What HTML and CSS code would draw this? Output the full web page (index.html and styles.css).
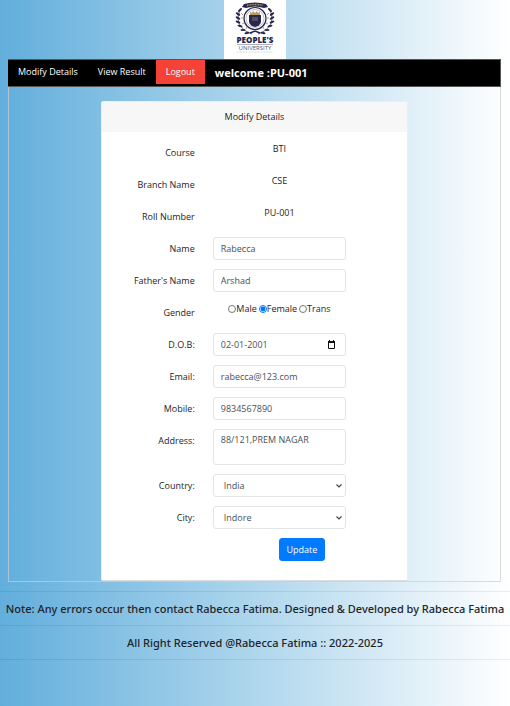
FILE: index.html
```html
<!DOCTYPE html>
<html lang="en">
<head>
<meta charset="utf-8">
<meta name="viewport" content="width=device-width, initial-scale=1">
<title>Modify Details</title>
<link rel="stylesheet" href="styles.css">
</head>
<body>
<header class="brand">
<svg class="logo" viewBox="0 0 62 59" role="img" aria-label="People's University">
<rect width="62" height="59" fill="#fff"/>
<g fill="none" stroke="#27264f">
<circle cx="31" cy="18.500" r="11" stroke-width="1.200"/>
<circle cx="31" cy="18.500" r="9" stroke-width=".5" stroke="#777a96"/>
<path d="M17 9C11 18 14 29 28 34M45 9c6 9 3 20-11 25" stroke-width=".7"/>
<path d="M26 33l5-2 5 2" stroke-width="1.500"/>
</g>
<path d="M20 4q11-3 22 0l2 3-4 1q-9-3-18 0l-4-1z" fill="#27264f"/>
<path d="M23 5.500q8-2 16 0" stroke="#b59a68" stroke-width="1.500" stroke-dasharray="1 .6" fill="none"/>
<path d="M25 15h12v7q-1 4-6 5-5-1-6-5z" fill="#27264f"/>
<path d="M26 12l2 1 1-2 2 2 2-2 1 2 2-1v3H26z" fill="#b59a68"/>
<path d="M28 18h6M28 20h6" stroke="#b59a68" stroke-width=".7"/>
<g fill="#27264f">
<ellipse cx="16" cy="10" rx="2.600" ry="1.100" transform="rotate(-45 16 10)"/>
<ellipse cx="14" cy="14" rx="2.600" ry="1.100" transform="rotate(35 14 14)"/>
<ellipse cx="14" cy="18" rx="2.600" ry="1.100" transform="rotate(30 14 18)"/>
<ellipse cx="14" cy="22" rx="2.600" ry="1.100" transform="rotate(25 14 22)"/>
<ellipse cx="16" cy="26" rx="2.600" ry="1.100" transform="rotate(15 16 26)"/>
<ellipse cx="19" cy="30" rx="2.600" ry="1.100"/>
<ellipse cx="23" cy="33" rx="2.600" ry="1.100" transform="rotate(-10 23 33)"/>
<ellipse cx="46" cy="10" rx="2.600" ry="1.100" transform="rotate(45 46 10)"/>
<ellipse cx="48" cy="14" rx="2.600" ry="1.100" transform="rotate(-35 48 14)"/>
<ellipse cx="48" cy="18" rx="2.600" ry="1.100" transform="rotate(-30 48 18)"/>
<ellipse cx="48" cy="22" rx="2.600" ry="1.100" transform="rotate(-25 48 22)"/>
<ellipse cx="46" cy="26" rx="2.600" ry="1.100" transform="rotate(-15 46 26)"/>
<ellipse cx="43" cy="30" rx="2.600" ry="1.100"/>
<ellipse cx="39" cy="33" rx="2.600" ry="1.100" transform="rotate(10 39 33)"/>
</g>
<path d="M17 13l2 2M17 18h2M18 24l2-1M22 29l1-2M45 13l-2 2M45 18h-2M44 24l-2-1M40 29l-1-2" stroke="#b59a68" stroke-width="1"/>
<text class="logo-main" x="31" y="43" text-anchor="middle">PEOPLE'S</text>
<path d="M13 44.500h36" stroke="#60607c" stroke-width=".5"/>
<text class="logo-sub" x="31" y="50" text-anchor="middle">UNIVERSITY</text>
<path d="M13 52h36" stroke="#aaa" stroke-width=".5" stroke-dasharray="1 .5"/>
</svg>
</header>
<div class="page">
<nav class="menu">
<a href="#modify">Modify Details</a>
<a href="#result">View Result</a>
<a class="logout" href="#logout">Logout</a>
<strong class="welcome">welcome :PU-001</strong>
</nav>
<main class="content">
<form class="card" id="modify">
<h1 class="card-title">Modify Details</h1>
<div class="fields">
<div class="row"><span class="label">Course</span><span class="field value">BTI</span></div>
<div class="row"><span class="label">Branch Name</span><span class="field value">CSE</span></div>
<div class="row"><span class="label">Roll Number</span><span class="field value">PU-001</span></div>
<div class="row"><label class="label" for="name">Name</label><div class="field"><input class="control" id="name" type="text" value="Rabecca"></div></div>
<div class="row"><label class="label" for="father">Father's Name</label><div class="field"><input class="control" id="father" type="text" value="Arshad"></div></div>
<div class="row" role="radiogroup" aria-labelledby="gender"><span class="label" id="gender">Gender</span><div class="field value radios">
<label><input type="radio" name="gender">Male</label>
<label><input type="radio" name="gender" checked>Female</label>
<label><input type="radio" name="gender">Trans</label>
</div></div>
<div class="row"><label class="label" for="dob">D.O.B:</label><div class="field"><div class="control date"><input id="dob" type="text" value="02-01-2001"><button class="calendar" type="button" aria-label="Choose date"><svg viewBox="0 0 9 10"><path d="M1.500 2.500h6v6h-6z" fill="none" stroke="#111"/><path d="M1 1h7v2H1zM2 0h1v2H2zM6 0h1v2H6z" fill="#111"/></svg></button></div></div></div>
<div class="row"><label class="label" for="email">Email:</label><div class="field"><input class="control" id="email" type="email" value="rabecca@123.com"></div></div>
<div class="row"><label class="label" for="mobile">Mobile:</label><div class="field"><input class="control" id="mobile" type="tel" value="9834567890"></div></div>
<div class="row"><label class="label" for="address">Address:</label><div class="field"><textarea class="control address" id="address">88/121,PREM NAGAR</textarea></div></div>
<div class="row"><label class="label" for="country">Country:</label><div class="field select"><select class="control" id="country"><option>India</option></select><svg class="chevron" viewBox="0 0 6 4"><path d="M.5.500L3 3 5.500.500" fill="none" stroke="#444" stroke-width="1.200"/></svg></div></div>
<div class="row"><label class="label" for="city">City:</label><div class="field select"><select class="control" id="city"><option>Indore</option></select><svg class="chevron" viewBox="0 0 6 4"><path d="M.5.500L3 3 5.500.500" fill="none" stroke="#444" stroke-width="1.200"/></svg></div></div>
<div class="actions"><button class="update" type="submit">Update</button></div>
</div>
</form>
</main>
</div>
<footer class="footer">
<p>Note: Any errors occur then contact Rabecca Fatima. Designed &amp; Developed by Rabecca Fatima</p>
<p>All Right Reserved @Rabecca Fatima :: 2022-2025</p>
</footer>
</body>
</html>
```
FILE: styles.css
```css
* {
  box-sizing: border-box;
}

body {
  margin: 0;
  min-height: 100vh;
  background: linear-gradient(to right, #62aedc, #b0d7ed 51%, #fff);
  color: #212529;
  font: 9px/14px "Open Sans", "Noto Sans", sans-serif;
}

input,
select,
textarea,
button {
  margin: 0;
  font: inherit;
  color: inherit;
}

.brand {
  display: flex;
  justify-content: center;
}

.logo {
  display: block;
  width: 62px;
  height: 59px;
}

.logo-main {
  fill: #27264f;
  font: 800 8px "Open Sans", sans-serif;
}

.logo-sub {
  fill: #55556c;
  font: 6px "Open Sans", sans-serif;
}

.page {
  margin: 0 9px 0 8px;
}

.menu {
  display: flex;
  height: 28px;
  background: #000;
  border: 1px solid #555;
  border-width: 1px 1px 1px 0;
  color: #fff;
}

.menu a {
  padding: 5px 10px;
  color: #fff;
  font-weight: 500;
  text-decoration: none;
}

.menu .logout {
  height: 24px;
  background: #f44336;
}

.welcome {
  padding: 6px 10px;
  font-size: 11px;
}

.content {
  padding: 14px 0 0;
  border: 1px solid rgba(205, 205, 205, 0.7);
  border-top: 0;
}

.card {
  width: 62.4%;
  margin: 0 auto;
  background: #fff;
  border: 1px solid #eee;
  border-bottom-color: #ddd;
  border-radius: 2px;
}

.card-title {
  margin: 0;
  padding: 8px;
  background: #f7f7f7;
  font-size: 9px;
  font-weight: 400;
  line-height: 14px;
  text-align: center;
}

.fields {
  display: flex;
  flex-direction: column;
  gap: 9px;
  padding: 9px 0 19px;
}

.row {
  display: flex;
  align-items: flex-start;
  min-height: 23px;
}

.label {
  width: 33%;
  padding: 5px 8px 0 0;
  text-align: right;
}

.field {
  width: 50.4%;
  padding: 0 10px;
}

.value {
  padding-top: 1px;
  text-align: center;
}

.control {
  display: block;
  width: 100%;
  height: 23px;
  padding: 3px 7px;
  background: #fff;
  border: 1px solid #e2e4e7;
  border-radius: 3px;
  color: #495057;
}

.radios {
  display: flex;
  justify-content: center;
  gap: 2px;
  white-space: nowrap;
}

.radios label {
  display: flex;
  align-items: center;
}

.radios input {
  width: 8px;
  height: 8px;
}

.date {
  display: flex;
  align-items: center;
}

.date input {
  flex: 1;
  min-width: 0;
  padding: 0;
  border: 0;
  background: none;
}

.calendar {
  padding: 0 2px;
  border: 0;
  background: none;
}

.calendar svg {
  display: block;
  width: 9px;
  height: 10px;
}

.address {
  height: 36px;
  resize: none;
}

.select {
  position: relative;
}

.select .control {
  appearance: none;
  padding-left: 10px;
}

.chevron {
  position: absolute;
  top: 10px;
  right: 14px;
  width: 6px;
  height: 4px;
  pointer-events: none;
}

.actions {
  padding-left: calc(50% + 24px);
}

.update {
  display: block;
  height: 23px;
  padding: 0 7px;
  background: #007bff;
  border: 1px solid #007bff;
  border-radius: 3px;
  color: #fff;
  font-weight: 500;
}

.footer {
  margin-top: 9px;
  border-top: 1px solid rgba(0, 0, 0, 0.07);
  font: 500 11px/16px "Noto Sans", "Open Sans", sans-serif;
  text-align: center;
  white-space: nowrap;
}

.footer p {
  margin: 0;
  padding: 9px 0 8px;
  border-bottom: 1px solid rgba(0, 0, 0, 0.07);
}
```
